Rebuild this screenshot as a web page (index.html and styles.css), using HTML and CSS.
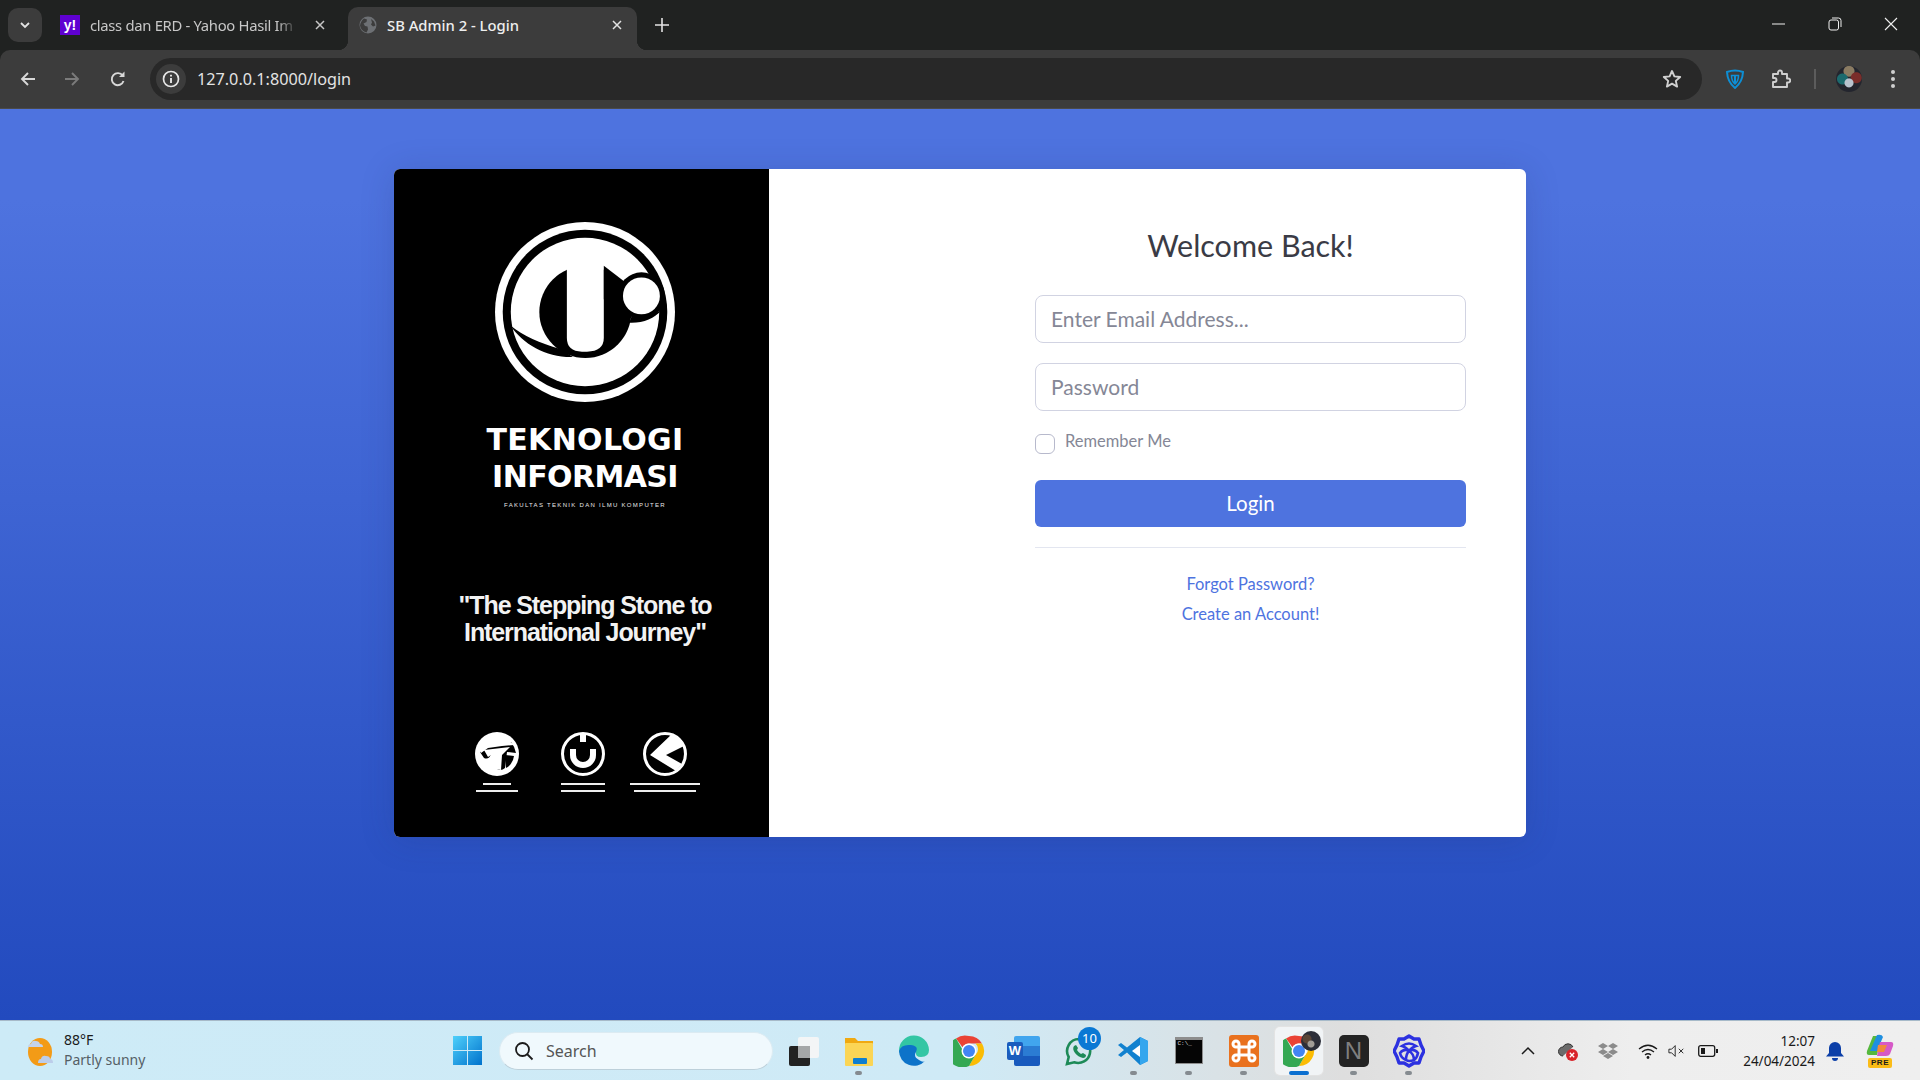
FILE: index.html
```html
<!DOCTYPE html>
<html lang="en">
  <head>
    <meta charset="UTF-8" />
    <meta name="viewport" content="width=device-width, initial-scale=1.0" />
    <title>SB Admin 2 - Login</title>
    <link rel="stylesheet" href="styles.css">
  </head>
  <body>
    <svg class="defs" width="0" height="0">
      <symbol id="chrome" viewBox="0 0 32 32">
        <path d="M16 1a15 15 0 0 1 13 7.500H16a7.500 7.500 0 0 0-6.500 3.750L3 3.500 A15 15 0 0 1 16 1z" fill="#ea4335"/>
        <path d="M29 8.500A15 15 0 0 1 16 31l6.500-11.250a7.500 7.500 0 0 0 0-11.250z" fill="#fbbc04"/>
        <path d="M16 31A15 15 0 0 1 3 3.500l6.500 11.250a7.500 7.500 0 0 0 13 5z" fill="#34a853"/>
        <circle cx="16" cy="16" r="7.500" fill="#fff"/>
        <circle cx="16" cy="16" r="6" fill="#4285f4"/>
      </symbol>
    </svg>

    <div class="tabstrip">
      <div class="tablist-btn">
        <svg width="12" height="12" viewBox="0 0 12 12"><path d="M2 4l4 4 4-4" fill="none" stroke="#e3e3e3" stroke-width="1.800"/></svg>
      </div>
      <div class="tab first">
        <span class="yahoo">y!</span>
        <span class="tab-title">class dan ERD - Yahoo Hasil Im</span>
        <svg class="tab-x" width="12" height="12" viewBox="0 0 12 12"><path d="M2 2l8 8M10 2l-8 8" stroke="#c7c7c7" stroke-width="1.500"/></svg>
      </div>
      <div class="tab active">
        <svg class="globe" width="18" height="18" viewBox="0 0 18 18">
          <circle cx="9" cy="9" r="8.500" fill="#6d7074"/>
          <path d="M5 2.500l3 1-.5 2.500-3 1.500 1.500 2.500 2.500.5.500 3-1.500 3C4 15.500 1.500 13 1 9.500 1.500 6.500 3 4 5 2.500zM12 3l3 2.500 1.500 4-2.500 1-2-2 1-2z" fill="#3c3c3c"/>
        </svg>
        <span class="tab-title">SB Admin 2 - Login</span>
        <svg class="tab-x" width="12" height="12" viewBox="0 0 12 12"><path d="M2 2l8 8M10 2l-8 8" stroke="#e3e3e3" stroke-width="1.500"/></svg>
      </div>
      <svg class="newtab" width="14" height="14" viewBox="0 0 14 14"><path d="M7 0v14M0 7h14" stroke="#e3e3e3" stroke-width="1.600"/></svg>
      <div class="win-btns">
        <svg width="14" height="14" viewBox="0 0 14 14"><path d="M0 7h13" stroke="#f0f0f0"/></svg>
        <svg width="14" height="14" viewBox="0 0 14 14"><rect x="1" y="3" width="9.500" height="10" rx="2" fill="none" stroke="#f0f0f0"/><path d="M4 1h6.500a2.500 2.500 0 0 1 2.500 2.500V10" fill="none" stroke="#f0f0f0"/></svg>
        <svg width="14" height="14" viewBox="0 0 14 14"><path d="M1 1l12 12M13 1L1 13" stroke="#f0f0f0" stroke-width="1.100"/></svg>
      </div>
    </div>

    <div class="toolbar">
      <div class="nav-btn">
        <svg width="18" height="18" viewBox="0 0 18 18"><path d="M16 9H3M9 3L3 9l6 6" fill="none" stroke="#d8d8d8" stroke-width="1.900"/></svg>
      </div>
      <div class="nav-btn">
        <svg width="18" height="18" viewBox="0 0 18 18"><path d="M2 9h13M9 3l6 6-6 6" fill="none" stroke="#7b7b7b" stroke-width="1.900"/></svg>
      </div>
      <div class="nav-btn">
        <svg width="18" height="18" viewBox="0 0 18 18"><path d="M14.500 11a6 6 0 1 1-.8-5.300" fill="none" stroke="#d8d8d8" stroke-width="1.900"/><path d="M15.500 1.500v5.500H10z" fill="#d8d8d8"/></svg>
      </div>
      <div class="omnibox">
        <div class="info-chip">
          <svg width="18" height="18" viewBox="0 0 18 18"><circle cx="9" cy="9" r="7.500" fill="none" stroke="#e6e6e6" stroke-width="1.700"/><path d="M9 8v5M9 4.800v1.800" stroke="#e6e6e6" stroke-width="1.900"/></svg>
        </div>
        <span class="url">127.0.0.1:8000/login</span>
        <svg class="star" width="20" height="20" viewBox="0 0 20 20"><path d="M10 2l2.400 5.400 5.800.6-4.400 3.900 1.300 5.700L10 14.600l-5.100 3 1.300-5.700L1.800 8l5.800-.6z" fill="none" stroke="#d0d0d0" stroke-width="1.900" stroke-linejoin="round"/></svg>
      </div>
      <div class="ext-btn">
        <svg width="18" height="20" viewBox="0 0 18 20"><path d="M1 3q8-3 16 0-.5 10-8 16Q1.500 13 1 3z" fill="none" stroke="#0d8fd6" stroke-width="2"/><path d="M5.500 6.500h7Q12.500 12 9 15 5.500 12 5.500 6.500z" fill="none" stroke="#0d8fd6" stroke-width="1.500"/><path d="M9 6.500V15" stroke="#0d8fd6" stroke-width="2"/></svg>
      </div>
      <div class="ext-btn">
        <svg width="20" height="20" viewBox="0 0 20 20"><path d="M2 5h5V3.500a2 2 0 0 1 4 0V5h5v4.500h1.200a2 2 0 0 1 0 4H16V18H2v-5h1.500a2 2 0 0 0 0-4H2z" fill="none" stroke="#cfcfcf" stroke-width="1.900" stroke-linejoin="round"/></svg>
      </div>
      <div class="tool-sep"></div>
      <div class="avatar"></div>
      <div class="dots"><i></i><i></i><i></i></div>
    </div>

    <main class="page">
      <div class="card">
        <div class="brand">
          <svg class="brand-logo" width="180" height="180" viewBox="316 170 536 536">
            <circle cx="584" cy="438" r="268" fill="#fff"/>
            <circle cx="584" cy="438" r="245" fill="#000"/>
            <circle cx="584" cy="438" r="221" fill="#fff"/>
            <circle cx="585" cy="438" r="137" fill="#000"/>
            <path d="M362 478C400 535 470 574 548 572L510 548C450 530 400 510 362 478z" fill="#000"/>
            <path d="M530 295H640V515Q640 556 590 556H575Q530 556 530 515z" fill="#fff"/>
            <path d="M640 300L705 350 720 420 640 400z" fill="#000"/>
            <circle cx="752" cy="390" r="70" fill="#000"/>
            <circle cx="752" cy="390" r="55" fill="#fff"/>
            <path d="M812 432C780 452 750 458 722 452L716 470C755 472 790 458 812 432z" fill="#000"/>
          </svg>
          <div class="brand-title">TEKNOLOGI<br><span class="title-second">INFORMASI</span></div>
          <div class="brand-small">FAKULTAS TEKNIK DAN ILMU KOMPUTER</div>
          <div class="brand-quote">"The Stepping Stone to<br>International Journey"</div>
          <div class="brand-row">
            <div class="mini">
              <svg width="46" height="46" viewBox="0 0 46 46">
                <circle cx="23" cy="23" r="22" fill="#fff"/>
                <path d="M6 21Q8 17 15 15L37 11Q41 16 42 22L33 21 31 37Q29 39 26 39L23 38 24 24 17 23Q15 29 10 27z" fill="#000"/>
                <path d="M4 17Q14 5 32 7L40 14 28 15 14 17 7 22z" fill="#fff"/>
                <path d="M10 19l26-3-8 8-1 15-5-1 1-13-6-1-3 2z" fill="#fff"/>
                <path d="M31 24l9 1q-1 8-8 12z" fill="#000"/>
              </svg>
              <i class="bar w28"></i><i class="bar w42"></i>
            </div>
            <div class="mini">
              <svg width="46" height="46" viewBox="0 0 46 46">
                <circle cx="23" cy="23" r="20.500" fill="none" stroke="#fff" stroke-width="3"/>
                <path d="M13 18v6a10 10 0 0 0 20 0v-6" fill="none" stroke="#fff" stroke-width="6"/>
                <path d="M23 4v7" stroke="#fff" stroke-width="6"/>
              </svg>
              <i class="bar w44"></i><i class="bar w44"></i>
            </div>
            <div class="mini">
              <svg width="46" height="46" viewBox="0 0 46 46">
                <circle cx="23" cy="23" r="20.500" fill="none" stroke="#fff" stroke-width="3"/>
                <path d="M30 3Q40 8 42 15L24 24 40 33 34 40 8 24z" fill="#fff"/>
              </svg>
              <i class="bar w70"></i><i class="bar w62"></i>
            </div>
          </div>
        </div>

        <div class="form-side">
          <h1 class="welcome">Welcome Back!</h1>
          <form class="login-form">
            <input class="field" type="email" placeholder="Enter Email Address...">
            <input class="field" type="password" placeholder="Password">
            <label class="remember"><span class="check"></span><span>Remember Me</span></label>
            <button class="login-btn" type="button">Login</button>
          </form>
          <hr class="rule">
          <div class="links">
            <a href="#">Forgot Password?</a>
            <a href="#">Create an Account!</a>
          </div>
        </div>
      </div>
    </main>

    <footer class="taskbar">
      <div class="task-left">
        <svg width="32" height="32" viewBox="0 0 32 32">
          <ellipse cx="16" cy="17" rx="12" ry="14" fill="#f39b17"/>
          <path d="M4 12q0-3 3-3 1-4 5-3 3 0 4 3 3 0 3 3z" fill="#c4d3ec"/>
          <path d="M14 28q0-4 3-4 1-4 5-3 4 0 4 3 3 0 3 4z" fill="#bccdea"/>
        </svg>
        <div class="weather">
          <span class="temp">88°F</span>
          <span class="sky">Partly sunny</span>
        </div>
      </div>
      <svg class="start" width="29" height="29" viewBox="0 0 29 29">
        <defs><linearGradient id="winblue" x1="0" y1="0" x2="1" y2="1"><stop offset="0" stop-color="#4fd0fb"/><stop offset="1" stop-color="#0072cc"/></linearGradient></defs>
        <path d="M0 0h14v14H0zM15 0h14v14H15zM0 15h14v14H0zM15 15h14v14H15z" fill="url(#winblue)"/>
      </svg>
      <div class="search">
        <svg width="20" height="20" viewBox="0 0 20 20"><circle cx="8.500" cy="8.500" r="6.500" fill="none" stroke="#1b1b1b" stroke-width="1.800"/><path d="M13 13l5.500 5.500" stroke="#1b1b1b" stroke-width="1.800"/></svg>
        <span>Search</span>
      </div>
      <div class="apps">
        <div class="app">
          <svg width="32" height="32" viewBox="0 0 32 32"><rect x="10" y="2" width="21" height="21" rx="2" fill="#f3f5f6"/><rect x="1" y="11" width="21" height="20" rx="2" fill="#222"/><rect x="10" y="11" width="12" height="12" fill="#a5a7a8"/></svg>
        </div>
        <div class="app dot">
          <svg width="32" height="32" viewBox="0 0 32 32"><path d="M2 3h10l3 3h15v24H2z" fill="#f0a911"/><rect x="2" y="8" width="28" height="23" rx="1" fill="#fbd555"/><rect x="10" y="23" width="14" height="6" rx="1" fill="#0f7fcf"/></svg>
        </div>
        <div class="app">
          <svg width="32" height="32" viewBox="0 0 32 32"><path d="M1 16A15 15 0 0 1 31 15Q31 22 23 22 17 22 18 17 19 11 13 11 4 11 4 21 1 18 1 16z" fill="#33c6a4"/><path d="M1 16Q3 9 13 10 21 11 18 17 15 22 21 25 25 28 27 26A15 15 0 0 1 1 16z" fill="#0d73c9"/></svg>
        </div>
        <div class="app">
          <svg width="32" height="32"><use href="#chrome"/></svg>
        </div>
        <div class="app">
          <span class="word-bg"><i></i><i></i><i></i></span>
          <span class="word-w">W</span>
        </div>
        <div class="app">
          <svg width="32" height="32" viewBox="0 0 32 32"><path d="M16 4a12 12 0 0 0-10.300 18L4 29l7.200-1.700A12 12 0 1 0 16 4z" fill="none" stroke="#1d8a57" stroke-width="2.600"/><path d="M11 11q-2 3 1 7t8 5q3 0 3-3l-3-2-2 1q-3-2-4-4l1-2-2-3z" fill="#1d8a57"/></svg>
          <span class="badge">10</span>
        </div>
        <div class="app dot">
          <svg width="32" height="32" viewBox="0 0 32 32"><path d="M22 2l8 4v20l-8 4-13-12.500-6 4.500-3-2 6-5-6-5 3-2 6 4.500z" fill="#1181cf"/><path d="M22 10v12l-8-6z" fill="#fff"/><path d="M22 2l8 4v20l-8 4z" fill="#35a6ee"/></svg>
        </div>
        <div class="app dot">
          <div class="term"><span>C:\_</span></div>
        </div>
        <div class="app dot">
          <svg width="30" height="32" viewBox="0 0 30 32"><rect width="30" height="32" rx="3" fill="#e9711e"/><path d="M10 9a3 3 0 1 0-3 3h3v8H7a3 3 0 1 0 3 3v-3h10v3a3 3 0 1 0 3-3h-3v-8h3a3 3 0 1 0-3-3v3H10z" fill="none" stroke="#fff" stroke-width="3"/></svg>
        </div>
        <div class="app current">
          <svg width="32" height="32"><use href="#chrome"/></svg>
          <span class="profile-badge"></span>
        </div>
        <div class="app dot">
          <span class="notion">N</span>
        </div>
        <div class="app dot">
          <svg width="32" height="34" viewBox="0 0 32 34"><path d="M16 2l5 3h5l2 6 3 6-3 6-2 6h-5l-5 3-5-3H6l-2-6-3-6 3-6 2-6h5z" fill="none" stroke="#2c31e0" stroke-width="3.400" stroke-linejoin="round"/><path d="M9 12q7-5 14 0-4 1-7 5-3-4-7-5zM16 17q5 3 5 9-5 2-8 0 0-6 3-9zM16 17q-5-3-9 2 1 5 6 7M16 17q5-3 9 2-1 5-4 7" fill="none" stroke="#2c31e0" stroke-width="2.600"/></svg>
        </div>
      </div>
      <div class="tray">
        <div class="tray-item w40"><svg width="14" height="10" viewBox="0 0 14 10"><path d="M1 8l6-6 6 6" fill="none" stroke="#1a1a1a" stroke-width="1.500"/></svg></div>
        <div class="tray-item w40">
          <svg width="22" height="22" viewBox="0 0 22 22"><path d="M6 16a4.500 4.500 0 0 1 0-9 5.500 5.500 0 0 1 10 0" fill="#6b6b6b" stroke="#333" stroke-width="1"/><circle cx="15" cy="15" r="6" fill="#d8232a"/><path d="M12.800 12.800l4.400 4.400M17.200 12.800l-4.400 4.400" stroke="#fff" stroke-width="1.300"/></svg>
        </div>
        <div class="tray-item w40">
          <svg width="20" height="18" viewBox="0 0 20 18"><path d="M5 1l5 3-5 3-5-3zM15 1l5 3-5 3-5-3zM5 7l5 3-5 3-5-3zM15 7l5 3-5 3-5-3zM10 11l5 3-5 3-5-3z" fill="#8b8b8b"/></svg>
        </div>
        <div class="tray-item w40">
          <svg width="20" height="16" viewBox="0 0 20 16"><path d="M1 6q9-7.500 18 0M4 9q6-5 12 0M7 12q3-2.500 6 0" fill="none" stroke="#1a1a1a" stroke-width="1.300"/><circle cx="10" cy="14.500" r="1.400" fill="#1a1a1a"/></svg>
        </div>
        <div class="tray-item w18">
          <svg width="20" height="14" viewBox="0 0 20 14"><path d="M1 5h3l4-4v12l-4-4H1z" fill="none" stroke="#1a1a1a"/><path d="M12 4.500l5 5M17 4.500l-5 5" stroke="#1a1a1a"/></svg>
        </div>
        <div class="tray-item w44">
          <svg width="20" height="12" viewBox="0 0 20 12"><rect x=".7" y=".7" width="16" height="10.600" rx="2" fill="none" stroke="#1a1a1a" stroke-width="1.300"/><rect x="3" y="3" width="4" height="6" fill="#1a1a1a"/><path d="M18 4h2v4h-2z" fill="#1a1a1a"/></svg>
        </div>
        <div class="clock"><span>12:07</span><span>24/04/2024</span></div>
        <div class="tray-item w40">
          <svg width="18" height="20" viewBox="0 0 18 20"><path d="M9 1a6 6 0 0 0-6 6v5l-3 3.500h18L15 12V7a6 6 0 0 0-6-6z" fill="#0c3fa8"/><path d="M6 17h6a3 3 0 0 1-6 0z" fill="#0c3fa8"/></svg>
        </div>
        <div class="tray-item w50 copilot">
          <svg width="28" height="24" viewBox="0 0 28 24"><path d="M7 2h9l-5 19H3Q0 21 1 17z" fill="#55b83d"/><path d="M11 1q5-1 6 2l-6 14H4z" fill="#1f8fe0"/><path d="M14 8h11q3 0 2 4l-3 8q-1 2-4 2H11z" fill="#d659c7"/><path d="M12 11h9l-3 7h-7z" fill="#f28a3c"/></svg>
          <span class="pre">PRE</span>
        </div>
      </div>
    </footer>
  </body>
</html>
```

FILE: styles.css
```css
* {
  box-sizing: border-box;
}
html,
body {
  margin: 0;
  height: 100%;
}
body {
  display: flex;
  flex-direction: column;
  height: 100vh;
  overflow: hidden;
  background-color: #202221;
  font-family: "Lato", "Noto Sans", sans-serif;
}
.defs {
  position: absolute;
}

/* browser chrome */
.tabstrip {
  display: flex;
  align-items: flex-end;
  height: 50px;
  flex-shrink: 0;
  background-color: #202221;
  font-family: "Noto Sans", sans-serif;
  font-size: 14px;
}
.tablist-btn {
  display: flex;
  align-items: center;
  justify-content: center;
  width: 34px;
  height: 34px;
  margin: 0 0 8px 8px;
  background-color: #3c3c3c;
  border-radius: 10px;
}
.tab {
  display: flex;
  align-items: center;
  width: 289px;
  height: 43px;
  padding: 0 14px 7px 18px;
  color: #c7c7c7;
}
.tab.first {
  width: 306px;
  padding-right: 22px;
}
.tab.first .tab-title {
  letter-spacing: -0.300px;
}
.tab.active {
  position: relative;
  padding-left: 11px;
  background-color: #3c3c3c;
  border-radius: 10px 10px 0 0;
  color: #eeeeee;
  font-weight: 500;
}
.tab.active::before,
.tab.active::after {
  content: "";
  position: absolute;
  bottom: 0;
  width: 10px;
  height: 10px;
}
.tab.active::before {
  left: -10px;
  background: radial-gradient(circle at 0 0, #202221 10px, #3c3c3c 10.500px);
}
.tab.active::after {
  right: -10px;
  background: radial-gradient(circle at 100% 0, #202221 10px, #3c3c3c 10.500px);
}
.yahoo {
  flex-shrink: 0;
  width: 20px;
  height: 20px;
  background-color: #5f01d1;
  color: #fff;
  font-family: "Liberation Sans", sans-serif;
  font-size: 14px;
  font-weight: bold;
  line-height: 20px;
  text-align: center;
}
.globe {
  flex-shrink: 0;
}
.tab-title {
  flex: 1;
  margin-left: 10px;
  overflow: hidden;
  white-space: nowrap;
  font-size: 14.800px;
  -webkit-mask-image: linear-gradient(90deg, #000 90%, transparent);
  mask-image: linear-gradient(90deg, #000 90%, transparent);
}
.tab.active .tab-title {
  -webkit-mask-image: none;
  mask-image: none;
}
.tab-x {
  flex-shrink: 0;
  margin-left: 16px;
}
.newtab {
  margin: 0 0 18px 18px;
}
.win-btns {
  display: flex;
  align-items: center;
  gap: 42px;
  margin: 0 22px 19px auto;
}
.toolbar {
  display: flex;
  align-items: center;
  height: 59px;
  flex-shrink: 0;
  padding-left: 6px;
  background-color: #3c3c3c;
  border-radius: 10px 10px 0 0;
  border-bottom: 1px solid #4a4a4a;
}
.nav-btn {
  display: flex;
  align-items: center;
  justify-content: center;
  width: 44px;
  height: 36px;
}
.nav-btn:nth-child(3) {
  width: 48px;
}
.omnibox {
  display: flex;
  align-items: center;
  width: 1552px;
  height: 42px;
  margin-left: 8px;
  padding: 0 20px 0 6px;
  background-color: #282828;
  border-radius: 21px;
}
.info-chip {
  display: flex;
  align-items: center;
  justify-content: center;
  width: 30px;
  height: 30px;
  background-color: #3c3c3c;
  border-radius: 50%;
}
.url {
  margin-left: 11px;
  color: #e3e3e3;
  font-family: "Noto Sans", sans-serif;
  font-size: 16.200px;
}
.star {
  margin-left: auto;
}
.ext-btn {
  display: flex;
  align-items: center;
  justify-content: center;
  width: 46px;
}
.ext-btn:nth-of-type(5) {
  margin-left: 10px;
}
.tool-sep {
  width: 2px;
  height: 20px;
  margin-left: 10px;
  background-color: #5c5c5c;
}
.avatar {
  width: 26px;
  height: 26px;
  margin-left: 20px;
  border-radius: 50%;
  background:
    radial-gradient(circle at 50% 65%, #b8c3cf 0 4px, transparent 5px),
    radial-gradient(circle at 25% 50%, #1b6a6e 0 5px, transparent 6px),
    radial-gradient(circle at 78% 45%, #7a2d2a 0 5px, transparent 6px),
    radial-gradient(circle at 50% 20%, #8a7b62 0 5px, transparent 6px),
    #23252e;
}
.dots {
  display: flex;
  flex-direction: column;
  gap: 3px;
  margin-left: 29px;
}
.dots i {
  width: 4px;
  height: 4px;
  background-color: #cfcfcf;
  border-radius: 50%;
}

/* login page */
.page {
  flex: 1;
  display: flex;
  justify-content: center;
  align-items: flex-start;
  padding-top: 60px;
  background-image: linear-gradient(180deg, #4e73df 10%, #224abe 100%);
}
.card {
  display: flex;
  width: 1132px;
  height: 668px;
  overflow: hidden;
  background-color: #fff;
  border-radius: 6px;
  box-shadow: 0 3px 34px rgba(34, 49, 110, 0.2);
}
.brand {
  display: flex;
  flex-direction: column;
  align-items: center;
  width: 375px;
  flex-shrink: 0;
  padding: 53px 0 0 7px;
  background-color: #000;
  color: #fff;
}
.brand-logo {
  display: block;
}
.brand-title {
  margin-top: 19px;
  font-family: "DejaVu Sans", sans-serif;
  font-size: 30px;
  font-weight: bold;
  line-height: 37px;
  text-align: center;
  letter-spacing: 0.300px;
}
.title-second {
  letter-spacing: -0.600px;
}
.brand-small {
  margin-top: 6px;
  font-family: "Liberation Sans", sans-serif;
  font-size: 6px;
  line-height: 8px;
  letter-spacing: 1.300px;
  white-space: nowrap;
  color: #e8e8e8;
}
.brand-quote {
  margin-top: 83px;
  font-family: "Liberation Sans", sans-serif;
  font-size: 25px;
  font-weight: bold;
  line-height: 27px;
  text-align: center;
  white-space: nowrap;
  letter-spacing: -1.100px;
  color: #f2f2f2;
}
.brand-row {
  display: flex;
  margin: 85px 12px 0 0;
}
.mini {
  display: flex;
  flex-direction: column;
  align-items: center;
  width: 84px;
}
.mini:first-child {
  width: 88px;
}
.mini:last-child {
  width: 80px;
}
.mini svg {
  display: block;
  margin-bottom: 6px;
}
.bar {
  display: block;
  height: 2px;
  margin-bottom: 5px;
  background-color: #eeeeee;
}
.w28 { width: 28px; }
.w42 { width: 42px; }
.w44 { width: 44px; }
.w62 { width: 62px; }
.w70 { width: 70px; flex-shrink: 0; }

.form-side {
  flex: 1;
  padding: 56px 60px 0 266px;
}
.welcome {
  margin: 0 0 30px;
  color: #3a3b45;
  font-size: 30.500px;
  font-weight: 400;
  line-height: 40px;
  text-align: center;
}
.login-form {
  display: flex;
  flex-direction: column;
}
.field {
  width: 100%;
  height: 48px;
  margin-bottom: 20px;
  padding: 0 15px 2px;
  border: 1px solid #d1d3e2;
  border-radius: 8px;
  background-color: #fff;
  font-family: inherit;
  font-size: 21px;
  color: #6e707e;
}
.field::placeholder {
  color: #858796;
  opacity: 1;
}
.remember {
  display: flex;
  align-items: flex-start;
  height: 49px;
  color: #858796;
  font-size: 16.500px;
  line-height: 20px;
}
.check {
  width: 20px;
  height: 20px;
  margin: 3px 10px 0 0;
  border: 1px solid #b7b9cc;
  border-radius: 6px;
  background-color: #fff;
}
.login-btn {
  height: 47px;
  padding: 0 0 2px;
  border: none;
  border-radius: 6px;
  background-color: #4e73df;
  color: #fff;
  font-family: inherit;
  font-size: 20.500px;
  cursor: pointer;
}
.rule {
  height: 1px;
  margin: 20px 0 25px;
  border: none;
  background-color: #e3e6f0;
}
.links {
  display: flex;
  flex-direction: column;
  align-items: center;
  gap: 8px;
  font-size: 16.500px;
  line-height: 22px;
}
.links a {
  color: #4e73df;
  text-decoration: none;
}

/* windows taskbar */
.taskbar {
  display: flex;
  align-items: center;
  height: 60px;
  flex-shrink: 0;
  border-top: 1px solid #a7bac9;
  background: linear-gradient(90deg, #cdebf7 0%, #cfeaf6 50%, #dedede 70%, #eeeeee 85%, #efefef 100%);
  font-family: "Noto Sans", sans-serif;
  color: #1a1a1a;
}
.task-left {
  display: flex;
  align-items: center;
  gap: 8px;
  width: 453px;
  padding-left: 24px;
}
.weather {
  display: flex;
  flex-direction: column;
  padding-bottom: 2px;
  font-size: 14px;
  line-height: 20px;
}
.sky {
  color: #555f66;
}
.start {
  flex-shrink: 0;
}
.search {
  display: flex;
  align-items: center;
  gap: 12px;
  width: 274px;
  height: 38px;
  margin-left: 17px;
  padding-left: 14px;
  background-color: #f0f9fd;
  border: 1px solid #dcebf2;
  border-bottom-color: #bdd0da;
  border-radius: 19px;
  color: #555;
  font-size: 16px;
}
.apps {
  display: flex;
  margin-left: 3px;
}
.app {
  position: relative;
  display: flex;
  align-items: center;
  justify-content: center;
  width: 55px;
  height: 48px;
}
.app.dot::after {
  content: "";
  position: absolute;
  bottom: 0;
  left: 24px;
  width: 7px;
  height: 4px;
  background-color: #858b90;
  border-radius: 2px;
}
.app.current {
  background-color: #f1f4f6;
  border-radius: 5px;
  box-shadow: 0 0 0 1px #e3e3e3;
  width: 48px;
  margin: 0 3.500px;
}
.app.current::after {
  content: "";
  position: absolute;
  bottom: 0;
  left: 14px;
  width: 20px;
  height: 4px;
  background-color: #0b6fd0;
  border-radius: 2px;
}
.word-bg {
  display: flex;
  flex-direction: column;
  width: 26px;
  height: 30px;
  margin-left: 6px;
  overflow: hidden;
  border-radius: 2px;
}
.word-bg i {
  flex: 1;
  background-color: #41a5ee;
}
.word-bg i:nth-child(2) {
  background-color: #2b7cd3;
}
.word-bg i:nth-child(3) {
  background-color: #185abd;
}
.word-w {
  position: absolute;
  left: 11px;
  top: 15px;
  width: 16px;
  height: 18px;
  background-color: #1a5cbd;
  border-radius: 2px;
  color: #fff;
  font-family: "Liberation Sans", sans-serif;
  font-size: 13px;
  font-weight: bold;
  line-height: 18px;
  text-align: center;
}
.badge {
  position: absolute;
  top: 0;
  right: 5px;
  width: 23px;
  height: 23px;
  background-color: #0a78d4;
  border-radius: 50%;
  color: #fff;
  font-size: 13px;
  line-height: 22px;
  text-align: center;
}
.term {
  width: 28px;
  height: 27px;
  background-color: #050505;
  border: 1px solid #8d8d8d;
  border-top-width: 3px;
  color: #ddd;
  font-family: "Liberation Mono", monospace;
  font-size: 6px;
  line-height: 8px;
  padding-left: 2px;
}
.profile-badge {
  position: absolute;
  top: 4px;
  right: 2px;
  width: 20px;
  height: 20px;
  border-radius: 50%;
  background:
    radial-gradient(circle at 50% 65%, #a09c96 0 3px, transparent 4px),
    radial-gradient(circle at 30% 40%, #5a4537 0 4px, transparent 5px),
    #2c2e38;
}
.notion {
  width: 30px;
  height: 32px;
  background-color: #232323;
  border-radius: 5px;
  color: #7f7f7f;
  font-family: "Liberation Sans", sans-serif;
  font-size: 24px;
  line-height: 32px;
  text-align: center;
}
.tray {
  display: flex;
  align-items: center;
  margin-left: auto;
  padding-right: 15px;
}
.tray-item {
  display: flex;
  align-items: center;
  justify-content: center;
}
.w40 { width: 40px; }
.w18 { width: 18px; }
.tray-item.w44 { width: 44px; }
.w50 { width: 50px; }
.clock {
  display: flex;
  flex-direction: column;
  align-items: flex-end;
  width: 85px;
  font-size: 13.500px;
  line-height: 20px;
}
.copilot {
  position: relative;
  height: 34px;
  align-items: flex-start;
}
.pre {
  position: absolute;
  left: 13px;
  bottom: 0;
  width: 24px;
  height: 10px;
  background-color: #fbbc17;
  border-radius: 2px;
  font-family: "Liberation Sans", sans-serif;
  font-size: 8px;
  font-weight: bold;
  line-height: 10px;
  text-align: center;
  letter-spacing: 0.500px;
}
```
